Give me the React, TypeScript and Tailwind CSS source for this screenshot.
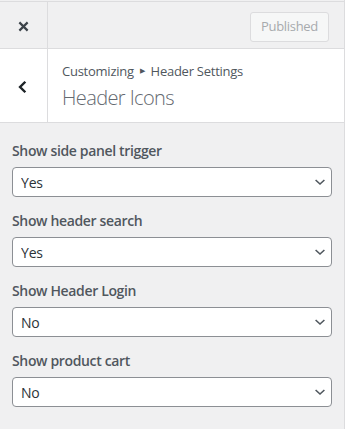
import React from "react";

const fields = [
  { label: "Show side panel trigger", value: "Yes" },
  { label: "Show header search", value: "Yes" },
  { label: "Show Header Login", value: "No" },
  { label: "Show product cart", value: "No" },
];

function Chevron() {
  return (
    <svg
      viewBox="0 0 20 20"
      className="pointer-events-none absolute right-[4px] top-1/2 h-[16px] w-[16px] -translate-y-1/2"
    >
      <path d="M4.5 7.5l5.5 5 5.5-5" fill="none" stroke="#50575e" strokeWidth="2" />
    </svg>
  );
}

export default function App() {
  return (
    <div
      className="flex h-[429px] w-[347px] bg-white"
      style={{ fontFamily: '"Open Sans", "Noto Sans", sans-serif' }}
    >
      <div className="flex w-[345px] flex-col border-r border-[#dcdcde] bg-[#f0f0f1] pt-px">
        {/* top bar */}
        <div className="flex h-[48px] border-y border-[#dcdcde]">
          <button className="flex w-[48px] items-center justify-center border-r border-[#dcdcde] text-[#3c434a]">
            <svg viewBox="0 0 12 12" className="mt-[3px] h-[11px] w-[11px]">
              <path d="M1.5 1.5l9 9M10.5 1.5l-9 9" stroke="currentColor" strokeWidth="2.4" />
            </svg>
          </button>
          <div className="flex flex-1 items-start justify-end pr-[15px] pt-[10px]">
            <button className="h-[30px] rounded-[3px] border border-[#dcdcde] bg-[#f6f7f7] px-[10px] text-[13px] tracking-[-0.3px] text-[#a7aaad]">
              Published
            </button>
          </div>
        </div>

        {/* section title */}
        <div className="flex h-[74px] border-b border-[#dcdcde] bg-white">
          <button className="flex w-[48px] items-center justify-center border-r border-[#dcdcde] text-[#1d2327]">
            <svg viewBox="0 0 12 12" className="ml-[-2px] mt-[2px] h-[14px] w-[14px]">
              <path d="M8 1.5L3.5 6 8 10.5" fill="none" stroke="currentColor" strokeWidth="2.1" />
            </svg>
          </button>
          <div className="flex flex-col pl-[14px] pt-[12px]">
            <div className="flex items-center text-[13px] leading-[20px] tracking-[-0.25px] text-[#50575e]">
              <span>Customizing</span>
              <span className="mx-[6px] text-[7px]">▶</span>
              <span>Header Settings</span>
            </div>
            <div className="mt-[4px] text-[20px] font-light leading-[26px] tracking-[-0.6px] text-[#646970]">
              Header Icons
            </div>
          </div>
        </div>

        {/* controls */}
        <div className="flex flex-col gap-[14px] px-[12px] pt-[18px]">
          {fields.map((f) => (
            <div key={f.label} className="flex flex-col">
              <label className="mb-[6px] text-[14px] font-semibold leading-[20px] tracking-[-0.35px] text-[#50575e]">
                {f.label}
              </label>
              <div className="relative">
                <select
                  defaultValue={f.value}
                  className="h-[30px] w-full appearance-none rounded-[4px] border border-[#8c8f94] bg-white pl-[8px] text-[14px] tracking-[-0.2px] text-[#2c3338] outline-none"
                >
                  <option>Yes</option>
                  <option>No</option>
                </select>
                <Chevron />
              </div>
            </div>
          ))}
        </div>
      </div>
    </div>
  );
}
